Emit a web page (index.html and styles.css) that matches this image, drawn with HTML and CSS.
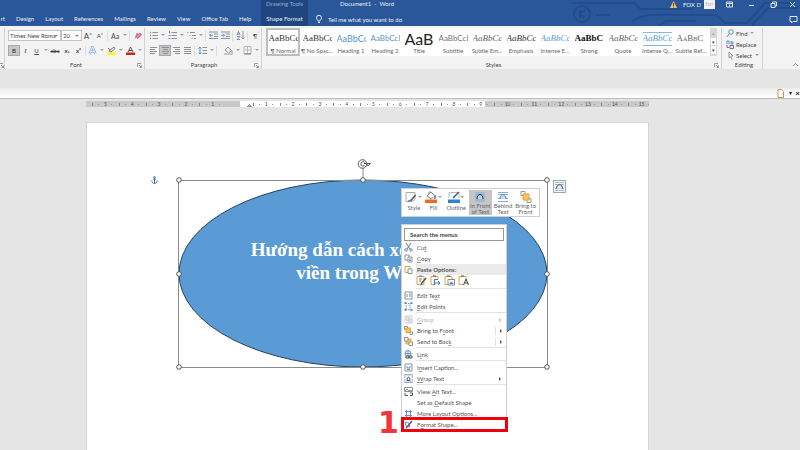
FILE: index.html
```html
<!DOCTYPE html>
<html lang="en">
<head>
<meta charset="utf-8">
<title>Document1 - Word</title>
<link rel="stylesheet" href="styles.css">
</head>
<body>
<header class="header">
  <svg class="circuit" viewBox="0 0 230 26" aria-hidden="true"><g fill="none" stroke="#224c8c" stroke-width="2"><path d="M2 3h62l7 6h50l10-8M26 15h14M62 22c10-10 30-7 50-7h34l9 8h22l18-20h30M90 25l6-4h30M182 25l16-17h30"/><circle cx="12" cy="14" r="8"/><path d="M10 10v8m5-8-5 4 5 4"/><path d="M122 0c3 8 13 8 17 0"/></g></svg>
  <nav class="tabs" aria-label="Ribbon tabs">
    <a href="#" class="cut">rt</a><a href="#">Design</a><a href="#">Layout</a><a href="#">References</a><a href="#">Mailings</a><a href="#">Review</a><a href="#">View</a><a href="#">Office Tab</a><a href="#">Help</a>
  </nav>
  <div class="context-tab"><span>Drawing Tools</span><a href="#">Shape Format</a></div>
  <div class="header-main">
    <div class="titlebar">
      <span class="doc-title">Document1&nbsp; -&nbsp; Word</span>
      <div class="window">
        <svg class="warn" viewBox="0 0 7 7"><path d="M3.500 0 7 7H0z" fill="#f5c469"/><path d="M3.500 2v3M3.500 5.500v1" stroke="#5a4a2a"/></svg>
        <span class="user">FOX D</span><span class="avatar">fơr</span>
        <button aria-label="Ribbon display options"><svg viewBox="0 0 9 9"><path d="M1.500 2h6v5h-6zM1.500 3.500h6M4.500 6.500v-2" /></svg></button>
        <button aria-label="Minimize"><svg viewBox="0 0 9 9"><path d="M2 5.500h5"/></svg></button>
        <button aria-label="Restore"><svg viewBox="0 0 9 9"><path d="M2 3.500h4v4H2zM3.500 3.500V2h4v4H6"/></svg></button>
        <button aria-label="Close"><svg viewBox="0 0 9 9"><path d="m2 2 5 5m0-5-5 5"/></svg></button>
      </div>
    </div>
    <div class="tell-row">
      <svg class="bulb" viewBox="0 0 8 9"><path d="M3 6C3 5 1.500 4.500 1.500 2.800a2.500 2.500 0 0 1 5 0C6.500 4.500 5 5 5 6zM3 7.500h2"/></svg>
      <a href="#">Tell me what you want to do</a>
      <button class="comment" aria-label="Comments"><svg viewBox="0 0 9 9"><path d="M1 1.500h7v5H4L2.500 8V6.500H1z"/></svg></button>
    </div>
  </div>
</header>

<section class="ribbon" aria-label="Ribbon">
  <div class="group g-clip"><svg class="launch" viewBox="0 0 5 5"><path d="M.5 4V.5H4M2 2l2.500 2.500M4.500 2.500v2h-2"/></svg></div>
  <div class="group g-font">
    <div class="row">
      <label class="combo wide"><select aria-label="Font"><option>Times New Roma</option></select></label>
      <label class="combo small"><select aria-label="Font size"><option>20</option></select></label>
      <button class="b12 t8" aria-label="Grow font">A<sup>^</sup></button><button class="b12" aria-label="Shrink font">A<sup>˅</sup></button><i class="sep"></i>
      <button class="b12 t7">Aa</button><i class="caret"></i><i class="sep"></i>
      <button class="b12" aria-label="Clear formatting"><svg class="ic" viewBox="0 0 9 9"><path d="M2 7.500 4 2l2 4" stroke="#999"/><path d="m3 5 4-3 1.500 2-4 3.500z" fill="#e8879a" stroke="#d6647b"/></svg></button>
    </div>
    <div class="row">
      <button class="b12 on"><b>B</b></button><button class="b11 ser"><em>I</em></button><button class="b11"><u>U</u></button><i class="caret"></i>
      <button class="b12"><s>abc</s></button><button class="b12 bold">x<sub>₂</sub></button><button class="b11 bold">x²</button><i class="sep"></i>
      <button class="b11" aria-label="Text effects"><svg class="ic" viewBox="0 0 9 9"><path d="M1.500 8 4.500 1l3 7M3 5.500h3" stroke="#8eb4de" stroke-width="2.500"/><path d="M1.500 8 4.500 1l3 7M3 5.500h3" stroke="#fff" stroke-width=".8"/></svg></button><i class="caret"></i>
      <button class="b12" aria-label="Highlight"><svg class="ic" viewBox="0 0 9 9"><path d="M0 6.500h9V9H0z" fill="#ff0" stroke="none"/><path d="m2 5 5-4 1 1.500-4 3.500zM1 2l2 2" stroke="#777"/></svg></button><i class="caret"></i>
      <button class="b12" aria-label="Font color"><svg class="ic" viewBox="0 0 9 9"><path d="M0 6.500h9V9H0z" fill="#e01b1b" stroke="none"/><path d="m2 6 2.500-5L7 6M3 4.500h3" stroke="#555"/></svg></button><i class="caret"></i>
    </div>
    <div class="glabel">Font</div><svg class="launch" viewBox="0 0 5 5"><path d="M.5 4V.5H4M2 2l2.500 2.500M4.500 2.500v2h-2"/></svg>
  </div>
  <div class="group g-para">
    <div class="row">
      <button class="b12" aria-label="Bullets"><svg class="ic" viewBox="0 0 9 9"><path d="M3.500 1.500H9m-5.500 3H9m-5.500 3H9"/><path class="bl" d="M1 1.500h1m-1 3h1m-1 3h1" stroke-width="1.500"/></svg></button><i class="caret"></i>
      <button class="b12" aria-label="Numbering"><svg class="ic" viewBox="0 0 9 9"><path d="M3.500 1.500H9m-5.500 3H9m-5.500 3H9"/><path class="bl" d="M1.500 0v2.500m-1 2h2m-2 3h2"/></svg></button><i class="caret"></i>
      <button class="b12" aria-label="Multilevel list"><svg class="ic" viewBox="0 0 9 9"><path d="M3 1.500h5m-3 3h4m-2 3h2"/><path class="bl" d="M.5 1.500h1m1 3h1m1 3h1"/></svg></button><i class="caret"></i><i class="sep"></i>
      <button class="b12" aria-label="Decrease indent"><svg class="ic" viewBox="0 0 9 9"><path d="M0 1h9M5 3h4M5 5.500h4M0 7.500h9"/><path class="bl" d="M4 4.300H.5M2 2.800.5 4.300 2 5.800"/></svg></button>
      <button class="b12" aria-label="Increase indent"><svg class="ic" viewBox="0 0 9 9"><path d="M0 1h9M5 3h4M5 5.500h4M0 7.500h9"/><path class="bl" d="M0 4.300h3.500M2 2.800l1.500 1.500L2 5.800"/></svg></button><i class="sep"></i>
      <button class="b12" aria-label="Sort"><svg class="ic" viewBox="0 0 9 9"><path class="bl" d="m1 4 1.500-3.500L4 4M1.500 3h2"/><path d="M1 5.500h3L1 8.500h3M7 0v8M5.500 6.500 7 8l1.500-1.500"/></svg></button><i class="sep"></i>
      <button class="b12">¶</button>
    </div>
    <div class="row">
      <button class="b12" aria-label="Align left"><svg class="ic" viewBox="0 0 9 9"><path d="M1 1.500h7m-7 2h5m-5 2h7m-7 2h5"/></svg></button><button class="b12 on" aria-label="Center"><svg class="ic" viewBox="0 0 9 9"><path d="M1 1.500h7m-6 2h5m-6 2h7m-6 2h5"/></svg></button><button class="b11" aria-label="Align right"><svg class="ic" viewBox="0 0 9 9"><path d="M1 1.500h7m-5 2h5m-7 2h7m-5 2h5"/></svg></button><button class="b11" aria-label="Justify"><svg class="ic" viewBox="0 0 9 9"><path d="M1 1.500h7m-7 2h7m-7 2h7m-7 2h7"/></svg></button><i class="sep"></i>
      <button class="b12" aria-label="Line spacing"><svg class="ic" viewBox="0 0 9 9"><path d="M4.500 1.500H9m-4.500 3H9m-4.500 3H9"/><path class="bl" d="M2 1v7M.5 2.500 2 1l1.500 1.500M.5 6.500 2 8l1.500-1.500"/></svg></button><i class="caret"></i><i class="sep"></i>
      <button class="b12 push" aria-label="Shading"><svg class="ic" viewBox="0 0 9 9"><path d="m4 1 3.500 3.500-3 2.500L1 4zM8 5v2"/><path d="M0 8h9" stroke="#bbb" stroke-width="1.500"/></svg></button><i class="caret"></i>
      <button class="b12" aria-label="Borders"><svg class="ic" viewBox="0 0 9 9"><path d="M1 .5h7v7H1zM4.500.5v7M1 4h7" stroke="#bbb"/><path d="M1 8h7" stroke="#777"/></svg></button><i class="caret"></i>
    </div>
    <div class="glabel">Paragraph</div><svg class="launch" viewBox="0 0 5 5"><path d="M.5 4V.5H4M2 2l2.500 2.500M4.500 2.500v2h-2"/></svg>
  </div>
  <div class="group g-styles">
    <div class="gallery">
      <button class="style sel"><span class="s-serif">AaBbCc</span><small>¶ Normal</small></button>
      <button class="style"><span class="s-serif">AaBbCc</span><small>¶ No Spac...</small></button>
      <button class="style"><span class="s-h1">AaBbCc</span><small>Heading 1</small></button>
      <button class="style"><span class="s-h2">AaBbCcD</span><small>Heading 2</small></button>
      <button class="style"><span class="s-title">AaB</span><small>Title</small></button>
      <button class="style"><span class="s-sub">AaBbCcD</span><small>Subtitle</small></button>
      <button class="style"><span class="s-em gray">AaBbCc</span><small>Subtle Em...</small></button>
      <button class="style"><span class="s-em">AaBbCc</span><small>Emphasis</small></button>
      <button class="style"><span class="s-em blue">AaBbCc</span><small>Intense E...</small></button>
      <button class="style"><span class="s-strong">AaBbC</span><small>Strong</small></button>
      <button class="style"><span class="s-em gray">AaBbCc</span><small>Quote</small></button>
      <button class="style"><span class="s-em blue lined">AaBbCc</span><small>Intense Q...</small></button>
      <button class="style"><span class="s-caps">AaBbC</span><small>Subtle Ref...</small></button>
      <div class="scroll"><button aria-label="Scroll up">▴</button><button aria-label="Scroll down">▾</button><button aria-label="More styles">▾</button></div>
    </div>
    <div class="glabel">Styles</div><svg class="launch" viewBox="0 0 5 5"><path d="M.5 4V.5H4M2 2l2.500 2.500M4.500 2.500v2h-2"/></svg>
  </div>
  <div class="group g-edit">
    <div class="cmds">
      <button><svg class="ic" viewBox="0 0 9 9"><circle class="bl" cx="5" cy="3" r="2.300"/><path class="bl" d="M3.500 4.500.8 8"/></svg>Find<i class="caret"></i></button>
      <button><svg class="ic" viewBox="0 0 9 9"><path class="bl" d="M1 4V1h2v3m2-3v3h2V2H5"/><path d="M4 5.500h3.500v3H4zM1 5v2.500h2" stroke="#8a62a8"/></svg>Replace</button>
      <button><svg class="ic" viewBox="0 0 9 9"><path d="M3 1v6l1.500-1.300L6 8.500M3 1l4 4H5"/></svg>Select<i class="caret"></i></button>
    </div>
    <div class="glabel">Editing</div>
  </div>
  <button class="collapse" aria-label="Collapse ribbon"><svg class="ic" viewBox="0 0 9 9"><path d="M2 6l2.500-2.500L7 6"/></svg></button>
</section>

<main class="workspace">
  <div class="docbar">
    <button aria-label="New document"><svg class="ic" viewBox="0 0 9 9"><path d="M2 .5h3.500l2 2v6H2z" fill="#fff" stroke="#c49a4a"/></svg></button>
    <button aria-label="Document list">▾</button><button aria-label="Close document">×</button>
  </div>
  <div class="ruler" aria-hidden="true"><div class="marks">
    <span>5</span><span>4</span><span>3</span><span>2</span><span>1</span><span class="zero"></span><span>1</span><span>2</span><span>3</span><span>4</span><span>5</span><span>6</span><span>7</span><span>8</span><span>9</span><span>10</span><span>11</span><span>12</span><span>13</span><span>14</span><span>15</span>
  </div></div>
  <article class="page">
    <svg class="anchor" viewBox="0 0 7 8"><path d="M3.500 2v5.500M2 3.200h3M.8 4.500C.8 6.500 2 7.300 3.500 7.500 5 7.300 6.200 6.500 6.200 4.500"/><circle cx="3.500" cy="1.300" r=".8"/></svg>
    <div class="shape">
      <svg class="outline" viewBox="-8 -28 384 223"><ellipse cx="184" cy="93.500" rx="184" ry="93.500" fill="#5b9bd5" stroke="#27415f"/><path d="M-.5.5h369v187h-369zM184 0v-12" fill="none" stroke="#8a8a8a"/><g fill="#fff" stroke="#555"><circle cx="0" cy="0" r="2.300"/><circle cx="184" cy="0" r="2.300"/><circle cx="368" cy="0" r="2.300"/><circle cx="0" cy="94" r="2.300"/><circle cx="368" cy="94" r="2.300"/><circle cx="0" cy="187" r="2.300"/><circle cx="184" cy="187" r="2.300"/><circle cx="368" cy="187" r="2.300"/></g><g fill="none" stroke="#555"><circle cx="183.500" cy="-16" r="4.300" fill="#fff"/><path d="M185.500-14.500a2.200 2.200 0 1 1 .2-3M185-16.500h6.500l-2.300 2.500-2-2.500"/></g></svg>
      <p>Hướng dẫn cách xóa đường<br>viền trong Word</p>
    </div>
    <button class="layout-options" aria-label="Layout options"><svg viewBox="0 0 11 11"><path d="M1 1.500h9m-9 2h9m-9 4h9m-9 2h9" stroke="#9fbbdc"/><path d="M2.500 7.500c0-5 6-5 6 0" fill="#e9f0f8" stroke="#444"/></svg></button>

    <div class="mini" role="toolbar" aria-label="Shape tools">
      <button><span><svg viewBox="0 0 12 12"><path d="M1 1.500h9v7l-3 2H1z" fill="#fff" stroke="#aaa"/><path d="m10.500 4-5 6" stroke="#555" stroke-width="1.500"/><path d="m3 10 3-1-1 2z" stroke="#4a8bd0"/></svg><i class="caret"></i></span>Style</button>
      <button><span><svg viewBox="0 0 12 12"><path d="m6 1 4 4-4 3-4-3zM4 3V1h2" fill="#fff" stroke="#888"/><path d="M10 4v4" stroke="#4a8bd0" stroke-width="1.500"/><path d="M0 8.500h12V12H0z" fill="#ed6b21"/></svg><i class="caret"></i></span>Fill</button>
      <button class="ol"><span><svg viewBox="0 0 12 12"><path d="M1 7V1.500h10V7" fill="none" stroke="#a9bdd4"/><path d="m11 1-6 6" stroke="#555" stroke-width="1.500"/><path d="M0 8.500h12V12H0z" fill="#2f83cf"/></svg><i class="caret"></i></span>Outline</button>
      <button class="big on"><span><svg viewBox="0 0 12 12"><path d="M1 1h10v10H1z" fill="#9db8da"/><path d="M3 8c0-6 6-6 6 0" fill="#c4d3e6" stroke="#333"/></svg></span>In Front<br>of Text</button>
      <button class="big"><span><svg viewBox="0 0 12 12"><path d="M1 1.500h10m-10 2h10m-10 4h10m-10 3h10" stroke="#87abd6"/><path d="M3 8c0-6 6-6 6 0" fill="#c5d9ee" stroke="#6685ab"/></svg></span>Behind<br>Text</button>
      <button class="big wide"><span><svg viewBox="0 0 12 12"><path d="M1 .5h4v4H1zM7 7.500h4v4H7z" fill="#fff" stroke="#999"/><path d="M3 3h6v6H3z" fill="#fbc15b" stroke="#e0a43c"/></svg></span>Bring to<br>Front</button>
    </div>

    <div class="menu" role="menu">
      <input type="text" aria-label="Search the menus" placeholder="Search the menus">
      <button class="item"><svg class="ic" viewBox="0 0 9 9"><path d="m2 0 4 6M7 0 3 6" stroke="#777"/><circle class="bl" cx="2" cy="7" r="1.300"/><circle class="bl" cx="7" cy="7" r="1.300"/></svg>Cu<u>t</u></button>
      <button class="item"><svg class="ic" viewBox="0 0 9 9"><path d="M1 1h4v5H1z"/><path d="M4 3h4v5H4z" fill="#fff"/><path class="bl" d="M5 5h2M5 6.500h2"/></svg><u>C</u>opy</button>
      <div class="item head"><svg class="ic" viewBox="0 0 9 9"><path d="M1 1.500h5v6H1z" stroke="#dba44a"/><path d="M4 4h4v4.500H4z" fill="#fff"/></svg><b>Paste Options:</b></div>
      <div class="paste">
        <button aria-label="Keep source formatting"><svg viewBox="0 0 11 11"><path d="M1 1.500h7v8H1z" fill="#fff" stroke="#e0a14a"/><path d="M3 1h3M3 4h3m-3 2h2" stroke="#777"/><path d="m10 3-5 6" stroke="#555" stroke-width="1.500"/><path d="m4 10 2-1" stroke="#4a8bd0"/></svg></button>
        <button aria-label="Merge formatting"><svg viewBox="0 0 11 11"><path d="M1 1.500h7v8H1z" fill="#fff" stroke="#e0a14a"/><path d="M3 1h3" stroke="#555"/><path d="M5 4h5v6H5z" fill="#fff"/><path d="M4.500 10V4.500H8M5 8h5M8 6l2 2-2 2" fill="none" stroke="#3f78bd"/></svg></button>
        <button aria-label="Picture"><svg viewBox="0 0 11 11"><path d="M1 1.500h7v8H1z" fill="#fff" stroke="#e0a14a"/><path d="M3 1h3" stroke="#555"/><path d="M4 4.500h6.500V10H4z" fill="#fff" stroke="#888"/><path d="m5 9 2-2.500 1.500 1L10 9z" fill="#4a8bd0"/></svg></button>
        <button aria-label="Keep text only"><svg viewBox="0 0 11 11"><path d="M1 1.500h7v8H1z" fill="#fff" stroke="#e0a14a"/><path d="M3 1h3" stroke="#555"/><path d="M5 4h6v7H5z" fill="#fff"/><path d="m5.500 10 2.500-6 2.500 6M6.500 8h3" fill="none" stroke="#444"/></svg></button>
      </div>
      <hr>
      <button class="item"><svg class="ic" viewBox="0 0 9 9"><path d="M1 1h7v7H1z"/><path class="bl" d="M3 3v3M5 3h2M5 5h2"/></svg>Edit Te<u>x</u>t</button>
      <button class="item"><svg class="ic" viewBox="0 0 9 9"><path class="bl" d="M1.500 1.500h6l-2 3 2 3h-6l1-3z" stroke-dasharray="1.500 1"/><path class="bl" d="M.5 1h2m4 0h2m-8 7h2m4 0h2" stroke-width="2"/></svg><u>E</u>dit Points</button>
      <hr>
      <button class="item off" disabled><svg class="ic" viewBox="0 0 9 9"><path d="M1 1h7v7H1zM2.500 2.500h3v3h-3zM4 4h3v3H4z"/></svg><u>G</u>roup<i class="arrow"></i></button>
      <button class="item"><svg class="ic" viewBox="0 0 9 9"><path d="M.5.5h3v3h-3zM6 6h2.500v2.500H6z"/><path d="M2 2h4.500v4.500H2z" fill="#fbc15b" stroke="#e0a43c"/></svg>Bring to F<u>r</u>ont<i class="arrow split"></i></button>
      <button class="item"><svg class="ic" viewBox="0 0 9 9"><path d="M2 2h5v5H2z" fill="#fbc15b" stroke="#e0a43c"/><path d="M.5.5h3.500v3.500H.5zM5 5h3.500v3.500H5z" fill="#fff"/></svg>Send to Bac<u>k</u><i class="arrow split"></i></button>
      <hr>
      <button class="item"><svg class="ic" viewBox="0 0 9 9"><circle class="bl" cx="4" cy="3.500" r="3"/><path class="bl" d="M1 3.500h6M4 .5v6"/><path d="M2 6h3v2H2zM5 6h3v2H5z" fill="#fff" stroke="#555"/></svg>L<u>i</u>nk</button>
      <hr>
      <button class="item"><svg class="ic" viewBox="0 0 9 9"><path d="M1 1h7v7H1z"/><path class="bl" d="M3 3v2h3V3M3 6.500h3"/></svg>I<u>n</u>sert Caption...</button>
      <button class="item"><svg class="ic" viewBox="0 0 9 9"><path class="bl" d="M0 .8h9M0 8.200h9M0 3h1.500m6 0H9M0 6h1.500m6 0H9"/><path d="M3 6.500c0-4.500 3-4.500 3 0z" stroke="#555"/></svg><u>W</u>rap Text<i class="arrow"></i></button>
      <hr>
      <button class="item"><svg class="ic" viewBox="0 0 9 9"><path d="M.5.5h8v4h-8z"/><path class="bl" d="m1 4 2-2 2 2 1-1 2 1"/><path d="M1 6v2.500h3M6 6h2.500v2.500H6" stroke="#555"/></svg>View <u>A</u>lt Text...</button>
      <button class="item"><i class="ic"></i>Set as <u>D</u>efault Shape</button>
      <button class="item"><svg class="ic" viewBox="0 0 9 9"><path class="bl" d="M2.500 1v7m4-7v7M1 2.500h7m-7 4h7"/></svg>More <u>L</u>ayout Options...</button>
      <button class="item marked"><svg class="ic" viewBox="0 0 9 9"><path class="bl" d="m1 2 4 1 1 4-4-1z"/><path d="M8 1 3.500 6.500 2 8" stroke="#555" stroke-width="1.300"/></svg>F<u>o</u>rmat Shape...</button>
    </div>
    <strong class="step">1</strong>
  </article>
</main>
</body>
</html>
```
FILE: styles.css
```css
* { box-sizing: border-box; }
body {
  margin: 0; min-height: 100vh; height: 100vh; overflow: hidden;
  display: flex; flex-direction: column;
  font: 6px/8px Lato, "Open Sans", sans-serif; color: #444; background: #e5e5e5;
}
button, select, input { font: inherit; color: inherit; border: 0; padding: 0; margin: 0; background: none; }
a { color: inherit; text-decoration: none; white-space: nowrap; }
svg { display: block; fill: none; }
i { font-style: normal; }

/* Title bar and tabs */
.header { position: relative; display: grid; grid-template-columns: 261px 47px 1fr; height: 26px; flex: none; background: #2a579a; color: #e8eef7; }
.circuit { position: absolute; right: 0; top: 0; width: 230px; height: 26px; }
.tabs { display: flex; align-items: flex-end; gap: 11px; padding: 0 0 3px; overflow: hidden; }
.tabs .cut { width: 5px; direction: rtl; }
.context-tab { background: #204680; display: flex; flex-direction: column; justify-content: space-between; align-items: center; padding-bottom: 3px; }
.context-tab span { color: #93abd0; white-space: nowrap; }
.header-main { position: relative; display: flex; flex-direction: column; justify-content: space-between; }
.titlebar { display: flex; justify-content: space-between; height: 9px; }
.doc-title { margin-left: 32px; }
.window { display: flex; align-items: center; }
.window button { width: 22px; display: flex; justify-content: center; }
.window button:last-child { width: 16px; }
.window svg { width: 9px; height: 9px; stroke: #dce6f5; }
.window .warn { width: 7px; height: 7px; stroke: none; margin-right: 6px; }
.user { margin-right: 3px; }
.avatar { background: #f1f1f1; color: #bbb; width: 11px; height: 9px; text-align: center; margin-right: 3px; }
.tell-row { display: flex; align-items: center; padding: 0 2px 2px 7px; }
.bulb { width: 8px; height: 9px; stroke: #e8eef7; margin-right: 5px; }
.comment { margin-left: auto; }
.comment svg { width: 9px; height: 9px; stroke: #dce6f5; }

/* Ribbon */
.ribbon { display: flex; height: 43px; flex: none; background: #f3f3f3; color: #444; padding-top: 2px; }
.group { position: relative; display: flex; flex-direction: column; border-right: 1px solid #d2d2d2; padding-left: 4px; }
.g-clip { width: 5px; }
.g-font { width: 140px; padding-left: 3px; }
.g-para { width: 117px; padding-left: 2px; }
.g-styles { flex: 0 0 460px; }
.g-edit { width: 41px; }
.row { display: flex; align-items: center; height: 15px; }
.row button { height: 11px; display: flex; align-items: center; justify-content: center; }
.b11 { width: 11px; }
.b12 { width: 12px; }
.push { margin-left: 4px; }
.t7 { font-size: 7px; }
.t8 { font-size: 8px; }
.bold { font-weight: bold; }
.ser { font-family: "Liberation Serif", serif; font-size: 7px; }
.row sup, .row sub { font-size: 5px; line-height: 5px; }
.row .on { background: #c6c6c6; border: 1px solid #a8a8a8; }
.ic { width: 9px; height: 9px; flex: none; stroke: #919191; }
.bl { stroke: #6593c8; }
.caret { width: 7px; height: 3px; display: flex; justify-content: center; }
.caret::after { content: ""; border: 2px solid transparent; border-top-color: #a0a0a0; border-bottom: 0; height: 0; }
.sep { width: 1px; height: 10px; margin: 0 1px; background: #dcdcdc; }
.combo { position: relative; display: flex; height: 11px; border: 1px solid #c4c4c4; background: #fff; }
.combo select { appearance: none; width: 100%; padding-left: 1px; }
.combo::after { content: ""; position: absolute; right: 2px; top: 4px; border: 2px solid transparent; border-top-color: #888; border-bottom: 0; }
.wide { width: 53px; }
.small { width: 21px; }
.glabel { margin-top: auto; text-align: center; }
.launch { position: absolute; right: 2px; bottom: 1px; width: 5px; height: 5px; stroke: #999; }
.g-clip .launch { right: 0; }
.gallery { display: flex; height: 28px; background: #fff; margin-right: 4px; }
.style { width: 34px; flex: none; padding: 0 2px; display: flex; flex-direction: column; justify-content: flex-end; align-items: center; }
.style.sel { outline: 2px solid #bdbdbd; outline-offset: -2px; }
.style span { width: 29px; height: 14px; line-height: 13px; overflow: hidden; white-space: nowrap; font-size: 9px; text-align: left; }
.style small { font-size: 6px; line-height: 10px; white-space: nowrap; color: #666; }
.style .s-serif, .style .s-em, .style .s-strong, .style .s-caps { font-family: "Liberation Serif", serif; color: #333; }
.style .s-em { font-style: italic; }
.style .s-strong { font-weight: bold; color: #111; }
.style .s-caps { font-variant: small-caps; color: #666; }
.style .s-h1 { color: #5b93cd; }
.style .s-h2 { color: #5b93cd; font-size: 8px; }
.style .s-sub { color: #777; font-size: 8px; }
.style .s-title { font-size: 16px; color: #222; }
.style .gray { color: #666; }
.style .blue { color: #5b9bd5; }
.style .lined { border: 1px solid #8db8e2; border-width: 1px 0; line-height: 11px; }
.scroll { margin-left: auto; width: 7px; display: flex; flex-direction: column; border: 1px solid #d8d8d8; }
.scroll button { flex: 1; line-height: 6px; font-size: 5px; border-bottom: 1px solid #d8d8d8; }
.scroll button:first-child { background: #d8d8d8; color: #aaa; }
.cmds { display: flex; flex-direction: column; }
.cmds button { display: flex; align-items: center; gap: 1px; height: 11px; white-space: nowrap; }
.collapse { margin-left: auto; align-self: flex-end; }

/* Document area */
.workspace { flex: 1; display: flex; flex-direction: column; padding-top: 19px; min-height: 0; }
.docbar { height: 11px; flex: none; display: flex; justify-content: flex-end; background: linear-gradient(#ededed, #fff); border-bottom: 1px solid #bdbdbd; color: #222; }
.docbar button { width: 10px; display: flex; align-items: center; justify-content: center; }
.docbar button:last-child { width: 5px; font-size: 8px; font-weight: bold; }
.ruler { flex: none; width: 563px; height: 6px; margin: 2px 0 16px 86px; padding-left: 6px; overflow: hidden; background: linear-gradient(90deg, #c9c9c9 154px, #fff 154px 399px, #c9c9c9 399px); }
.marks { display: grid; grid-template-columns: repeat(21, 1fr); width: 563px; color: #555; }
.marks span { text-align: center; font-size: 5px; line-height: 6px; height: 6px; background: linear-gradient(#888, #888) 0 2px / 1px 3px no-repeat, linear-gradient(#999, #999) 25% 3px / 1px 1px no-repeat, linear-gradient(#999, #999) 75% 3px / 1px 1px no-repeat; }
.marks .zero { background: conic-gradient(from 135deg at 50% 50%, #999 90deg, transparent 0) 20px 0 / 6px 6px no-repeat; }
.page { position: relative; flex: 1; width: 561px; margin-left: 87px; background: #fff; box-shadow: 0 0 0 1px #d6d6d6; }
.anchor { position: absolute; left: 64px; top: 53px; width: 7px; height: 8px; stroke: #3d6fae; }
.shape { position: absolute; left: 92px; top: 57px; width: 368px; height: 187px; display: flex; justify-content: center; }
.outline { position: absolute; left: -8px; top: -28px; width: 384px; height: 223px; }
.shape p { position: relative; margin: 58px 0 0; color: #fff; text-align: center; white-space: nowrap; font: bold 19px/23px "Liberation Serif", serif; }
.layout-options { position: absolute; left: 466px; top: 57px; width: 13px; height: 13px; border: 1px solid #a5a5a5; background: #f4f7fb; }

/* Floating toolbar */
.mini { position: absolute; left: 314px; top: 65px; width: 139px; height: 29px; display: flex; padding: 1px 2px; background: #fff; border: 1px solid #d0d0d0; line-height: 6px; color: #666; }
.mini button { width: 20px; display: flex; flex-direction: column; align-items: center; gap: 2px; padding-top: 1px; white-space: nowrap; }
.mini .ol { width: 26px; }
.mini .big { width: 23px; gap: 0; }
.mini .wide { width: 23px; }
.mini .on { background: #c6c6c6; }
.mini span { display: flex; align-items: center; }
.mini svg { width: 12px; height: 12px; flex: none; }
.mini .caret { width: 5px; }

/* Context menu */
.menu { position: absolute; left: 314px; top: 101px; width: 106px; background: #fff; border: 1px solid #cfcfcf; padding-top: 3px; display: flex; flex-direction: column; color: #555; }
.menu input { height: 13px; margin: 0 2px 1px 2px; padding-left: 5px; border: 1px solid #999; font-weight: bold; }
.menu input::placeholder { color: #444; opacity: 1; }
.item { height: 11px; display: flex; align-items: center; padding-left: 2px; text-align: left; white-space: pre; }
.item .ic { margin-right: 4px; }
.item u { text-decoration-color: #999; text-underline-offset: 1px; }
.head { background: linear-gradient(90deg, #fff 14px, #eaeaea 14px); }
.off { color: #b5b5b5; }
.off .ic { stroke: #ccc; }
.arrow { margin-left: auto; width: 11px; height: 8px; display: flex; align-items: center; padding-left: 4px; }
.arrow::after { content: ""; border: 2px solid transparent; border-left-color: currentColor; border-right: 0; }
.split { border-left: 1px solid #e0e0e0; }
.paste { display: flex; gap: 3px; padding: 0 0 2px 14px; }
.paste svg { width: 11px; height: 11px; }
.menu hr { border: 0; border-top: 1px solid #e2e2e2; margin: 0 0 1px 14px; width: auto; align-self: stretch; }
.marked { position: relative; }
.marked::after { content: ""; position: absolute; inset: -2px -2px -2px -1px; border: 3px solid #f0000c; }
.step { position: absolute; left: 291px; top: 284px; font: bold 30px/32px "DejaVu Sans", sans-serif; color: #f5333b; }
```
